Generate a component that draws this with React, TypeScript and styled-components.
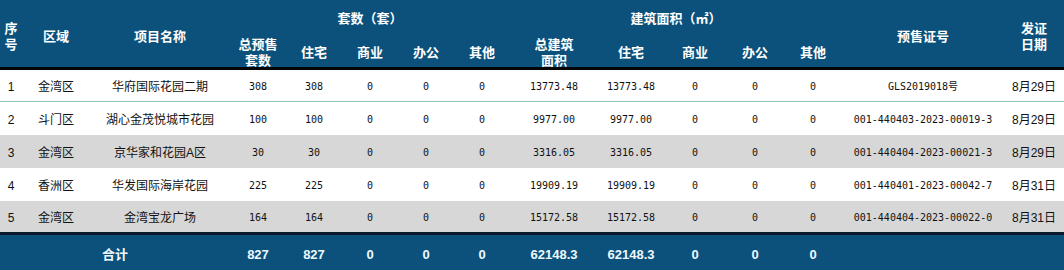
import React from "react";
import styled, { createGlobalStyle } from "styled-components";

type Row = {
  no: number;
  area: string;
  name: string;
  nums: string[];
  permit: string;
  date: string;
};

const rows: Row[] = [
  { no: 1, area: "金湾区", name: "华府国际花园二期", nums: ["308", "308", "0", "0", "0", "13773.48", "13773.48", "0", "0", "0"], permit: "GLS2019018号", date: "8月29日" },
  { no: 2, area: "斗门区", name: "湖心金茂悦城市花园", nums: ["100", "100", "0", "0", "0", "9977.00", "9977.00", "0", "0", "0"], permit: "001-440403-2023-00019-3", date: "8月29日" },
  { no: 3, area: "金湾区", name: "京华家和花园A区", nums: ["30", "30", "0", "0", "0", "3316.05", "3316.05", "0", "0", "0"], permit: "001-440404-2023-00021-3", date: "8月29日" },
  { no: 4, area: "香洲区", name: "华发国际海岸花园", nums: ["225", "225", "0", "0", "0", "19909.19", "19909.19", "0", "0", "0"], permit: "001-440401-2023-00042-7", date: "8月31日" },
  { no: 5, area: "金湾区", name: "金湾宝龙广场", nums: ["164", "164", "0", "0", "0", "15172.58", "15172.58", "0", "0", "0"], permit: "001-440404-2023-00022-0", date: "8月31日" },
];

const totals = ["827", "827", "0", "0", "0", "62148.3", "62148.3", "0", "0", "0"];

const widths = [22, 68, 140, 56, 56, 56, 56, 56, 88, 66, 62, 58, 58, 162, 60];

const GlobalStyle = createGlobalStyle`
  body {
    margin: 0;
    background: #fff;
    font-family: "Liberation Sans", "Noto Sans CJK SC", sans-serif;
  }
`;

const Table = styled.table`
  width: 1064px;
  border-collapse: separate;
  border-spacing: 0;
  table-layout: fixed;
`;

const Head = styled.thead`
  background: #0b517b;
  color: #fff;
`;

const HeadRow = styled.tr<{ $h: number }>`
  height: ${(p) => p.$h}px;
`;

const Th = styled.th<{ $top?: boolean; $last?: boolean }>`
  padding: ${(p) => (p.$top ? "4px 0 0" : "0")};
  border-bottom: ${(p) => (p.$last ? "3px solid #050505" : "none")};
  font-family: "Noto Sans CJK SC", sans-serif;
  font-size: 13px;
  font-weight: 700;
  line-height: 15.5px;
  text-align: center;
  vertical-align: middle;
`;

const BodyRow = styled.tr<{ $shade: boolean; $h: number }>`
  height: ${(p) => p.$h}px;
  background: ${(p) => (p.$shade ? "#d7d7d7" : "#ffffff")};
`;

const Td = styled.td<{ $mono?: boolean; $line?: boolean }>`
  padding: 3px 0 0;
  border-bottom: ${(p) => (p.$line ? "1px solid #8fc5b2" : "none")};
  font-family: ${(p) =>
    p.$mono ? `"DejaVu Sans Mono", "Noto Sans CJK SC", monospace` : `"Liberation Sans", "Noto Sans CJK SC", sans-serif`};
  font-size: ${(p) => (p.$mono ? "10px" : "12px")};
  line-height: 16px;
  color: #111;
  text-align: center;
  vertical-align: middle;
  white-space: nowrap;
`;

const FootCell = styled.td`
  height: 38px;
  padding: 1px 0 0;
  background: #0b517b;
  border-top: 3px solid #0a1a2b;
  border-bottom: 2px solid #0a1a2b;
  color: #eef8ff;
  font-size: 13px;
  font-weight: 700;
  line-height: 16px;
  text-align: center;
  vertical-align: middle;
`;

export default function App() {
  return (
    <>
      <GlobalStyle />
      <Table>
        <colgroup>
          {widths.map((w, i) => (
            <col key={i} style={{ width: w }} />
          ))}
        </colgroup>
        <Head>
          <HeadRow $h={36}>
            <Th rowSpan={2} $top $last>序<br />号</Th>
            <Th rowSpan={2} $top $last>区域</Th>
            <Th rowSpan={2} $top $last>项目名称</Th>
            <Th colSpan={5}>套数（套）</Th>
            <Th colSpan={5}>建筑面积（㎡）</Th>
            <Th rowSpan={2} $top $last>预售证号</Th>
            <Th rowSpan={2} $top $last>发证<br />日期</Th>
          </HeadRow>
          <HeadRow $h={34}>
            <Th $last>总预售<br />套数</Th>
            <Th $last>住宅</Th>
            <Th $last>商业</Th>
            <Th $last>办公</Th>
            <Th $last>其他</Th>
            <Th $last>总建筑<br />面积</Th>
            <Th $last>住宅</Th>
            <Th $last>商业</Th>
            <Th $last>办公</Th>
            <Th $last>其他</Th>
          </HeadRow>
        </Head>
        <tbody>
          {rows.map((r, i) => {
            const first = i === 0;
            return (
              <BodyRow key={r.no} $shade={i % 2 === 0 && i > 0} $h={first ? 32 : i === 4 ? 31 : 33}>
                <Td $line={first}>{r.no}</Td>
                <Td $line={first}>{r.area}</Td>
                <Td $line={first}>{r.name}</Td>
                {r.nums.map((n, j) => (
                  <Td key={j} $mono $line={first}>
                    {n}
                  </Td>
                ))}
                <Td $mono $line={first}>{r.permit}</Td>
                <Td $line={first}>{r.date}</Td>
              </BodyRow>
            );
          })}
        </tbody>
        <tfoot>
          <tr>
            <FootCell colSpan={3}>合计</FootCell>
            {totals.map((t, j) => (
              <FootCell key={j}>{t}</FootCell>
            ))}
            <FootCell />
            <FootCell />
          </tr>
        </tfoot>
      </Table>
    </>
  );
}
